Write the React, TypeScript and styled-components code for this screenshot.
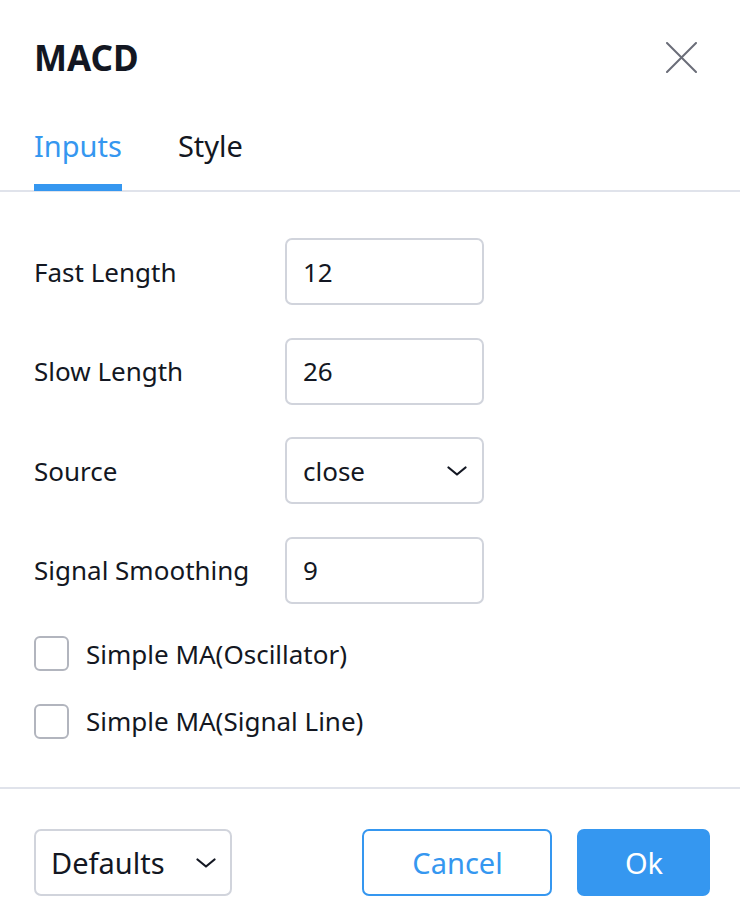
import React from 'react'
import styled, { createGlobalStyle } from 'styled-components'

const GlobalStyle = createGlobalStyle`
  html, body {
    margin: 0;
    padding: 0;
    background: #ffffff;
  }

  body {
    font-family: 'Noto Sans', 'DejaVu Sans', sans-serif;
    color: #131722;
  }
`

const Dialog = styled.div`
  width: 740px;
  height: 918px;
  background: #ffffff;
  display: flex;
  flex-direction: column;
`

const Header = styled.header`
  display: flex;
  justify-content: space-between;
  align-items: center;
  padding: 28px 43px 0 34px;
  height: 58px;
`

const Title = styled.h1`
  margin: 0;
  font-size: 35px;
  font-weight: 700;
  line-height: 1;
  color: #131722;
`

const CloseButton = styled.button`
  width: 31px;
  height: 31px;
  padding: 0;
  border: none;
  background: none;
  display: flex;
  align-items: center;
  justify-content: center;
`

const Tabs = styled.nav`
  display: flex;
  gap: 56px;
  padding: 0 34px;
  height: 104px;
  align-items: flex-end;
  border-bottom: 2px solid #e0e3eb;
`

const Tab = styled.div<{ $active?: boolean }>`
  position: relative;
  font-size: 29px;
  line-height: 1;
  padding-bottom: 30px;
  color: ${(p) => (p.$active ? '#3597f0' : '#131722')};

  &::after {
    content: '';
    display: ${(p) => (p.$active ? 'block' : 'none')};
    position: absolute;
    left: 0;
    right: 0;
    bottom: -1px;
    height: 7px;
    background: #3597f0;
  }
`

const Body = styled.section`
  display: flex;
  flex-direction: column;
  gap: 32.5px;
  padding: 46px 34px 48.5px;
  border-bottom: 2px solid #e0e3eb;
`

const FieldRow = styled.div`
  display: grid;
  grid-template-columns: 251px 199px;
  align-items: center;
  height: 67px;
`

const Label = styled.span`
  font-size: 26px;
  line-height: 1;
`

const Field = styled.div`
  box-sizing: border-box;
  height: 67px;
  border: 2px solid #d1d4dc;
  border-radius: 7px;
  display: flex;
  align-items: center;
  justify-content: space-between;
  padding: 0 15px 0 16px;
  font-size: 26px;
  color: #131722;
`

const CheckRow = styled.label`
  display: flex;
  align-items: center;
  gap: 17px;
  height: 35px;
  font-size: 26px;
`

const CheckBox = styled.span`
  box-sizing: border-box;
  width: 35px;
  height: 35px;
  border: 2px solid #b2b5be;
  border-radius: 6px;
`

const Footer = styled.footer`
  display: flex;
  align-items: center;
  padding: 40px 30px 0 34px;
  gap: 25px;
`

const Button = styled.button<{ $variant: 'plain' | 'outline' | 'primary'; $width: number }>`
  box-sizing: border-box;
  width: ${(p) => p.$width}px;
  height: 67px;
  border-radius: 7px;
  font-family: inherit;
  font-size: 29px;
  display: flex;
  align-items: center;
  justify-content: ${(p) => (p.$variant === 'plain' ? 'space-between' : 'center')};
  padding: 0 14px 0 15px;
  border: 2px solid
    ${(p) => (p.$variant === 'plain' ? '#d1d4dc' : '#3597f0')};
  background: ${(p) => (p.$variant === 'primary' ? '#3597f0' : '#ffffff')};
  color: ${(p) =>
    p.$variant === 'primary' ? '#ffffff' : p.$variant === 'outline' ? '#3597f0' : '#131722'};

  &:first-child {
    margin-right: auto;
  }
`

const Chevron = () => (
  <svg width="20" height="10" viewBox="0 0 20 10" fill="none">
    <path d="M1.5 1.5 L10 8.5 L18.5 1.5" stroke="#131722" strokeWidth="2.2" strokeLinecap="round" strokeLinejoin="round" />
  </svg>
)

const fields = [
  { label: 'Fast Length', value: '12' },
  { label: 'Slow Length', value: '26' },
  { label: 'Source', value: 'close', select: true },
  { label: 'Signal Smoothing', value: '9' },
]

const checks = ['Simple MA(Oscillator)', 'Simple MA(Signal Line)']

const App = () => {
  return (
    <>
      <GlobalStyle />
      <Dialog>
        <Header>
          <Title>MACD</Title>
          <CloseButton aria-label="close">
            <svg width="31" height="31" viewBox="0 0 31 31">
              <path d="M1 1 L30 30 M30 1 L1 30" stroke="#6a6d78" strokeWidth="2" strokeLinecap="round" />
            </svg>
          </CloseButton>
        </Header>

        <Tabs>
          <Tab $active>Inputs</Tab>
          <Tab>Style</Tab>
        </Tabs>

        <Body>
          {fields.map((f) => (
            <FieldRow key={f.label}>
              <Label>{f.label}</Label>
              <Field>
                {f.value}
                {f.select && <Chevron />}
              </Field>
            </FieldRow>
          ))}
          {checks.map((c) => (
            <CheckRow key={c}>
              <CheckBox />
              {c}
            </CheckRow>
          ))}
        </Body>

        <Footer>
          <Button $variant="plain" $width={198}>
            Defaults
            <Chevron />
          </Button>
          <Button $variant="outline" $width={190}>Cancel</Button>
          <Button $variant="primary" $width={133}>Ok</Button>
        </Footer>
      </Dialog>
    </>
  )
}

export default App
